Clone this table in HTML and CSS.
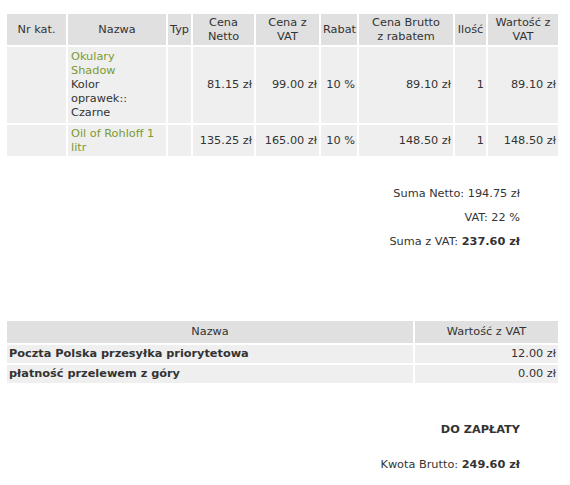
FILE: index.html
```html
<!DOCTYPE html>
<html lang="pl">
<head>
<meta charset="utf-8">
<title>Koszyk</title>
<link rel="stylesheet" href="styles.css">
</head>
<body>
<div class="page">
  <table class="items">
    <thead>
      <tr>
        <th class="c-nr">Nr kat.</th>
        <th class="c-name">Nazwa</th>
        <th class="c-typ">Typ</th>
        <th class="c-netto">Cena Netto</th>
        <th class="c-vat">Cena z VAT</th>
        <th class="c-rabat">Rabat</th>
        <th class="c-brutto">Cena Brutto<br>z rabatem</th>
        <th class="c-ilosc">Ilość</th>
        <th class="c-wart">Wartość z VAT</th>
      </tr>
    </thead>
    <tbody>
      <tr class="tall">
        <td></td>
        <td class="name"><a class="prod" href="#">Okulary Shadow</a><br>Kolor oprawek:: Czarne</td>
        <td></td>
        <td class="num">81.15 zł</td>
        <td class="num">99.00 zł</td>
        <td class="num">10 %</td>
        <td class="num">89.10 zł</td>
        <td class="num">1</td>
        <td class="num">89.10 zł</td>
      </tr>
      <tr>
        <td></td>
        <td class="name"><a class="prod" href="#">Oil of Rohloff 1 litr</a></td>
        <td></td>
        <td class="num">135.25 zł</td>
        <td class="num">165.00 zł</td>
        <td class="num">10 %</td>
        <td class="num">148.50 zł</td>
        <td class="num">1</td>
        <td class="num">148.50 zł</td>
      </tr>
    </tbody>
  </table>

  <div class="sums">
    <p>Suma Netto: 194.75 zł</p>
    <p>VAT: 22 %</p>
    <p>Suma z VAT: <b>237.60 zł</b></p>
  </div>

  <table class="ship">
    <thead>
      <tr>
        <th class="s-name">Nazwa</th>
        <th class="s-val">Wartość z VAT</th>
      </tr>
    </thead>
    <tbody>
      <tr>
        <td class="bold">Poczta Polska przesyłka priorytetowa</td>
        <td class="num">12.00 zł</td>
      </tr>
      <tr>
        <td class="bold">płatność przelewem z góry</td>
        <td class="num">0.00 zł</td>
      </tr>
    </tbody>
  </table>

  <div class="total">
    <p class="total-title">DO ZAPŁATY</p>
    <p>Kwota Brutto: <b>249.60 zł</b></p>
  </div>
</div>
</body>
</html>
```
FILE: styles.css
```css
html, body {
  margin: 0;
  padding: 0;
  background: #ffffff;
}
body {
  font-family: "DejaVu Sans", Verdana, sans-serif;
  font-size: 11.3px;
  color: #333333;
}
.page {
  padding: 12px 0 0 5px;
  width: 555px;
}
table {
  border-collapse: separate;
  border-spacing: 2px;
  table-layout: fixed;
  width: 555px;
}
th, td {
  box-sizing: border-box;
  line-height: 14px;
  font-weight: normal;
}
th {
  background: #e0e0e0;
  text-align: center;
  padding: 1px 2px;
  height: 31px;
}
td {
  background: #efefef;
  padding: 1px 2px;
  height: 31px;
  vertical-align: middle;
}
.items .tall td {
  padding-top: 3px;
  padding-bottom: 3px;
}
.items .name {
  text-align: left;
  padding-left: 3px;
  padding-right: 9px;
}
.num {
  text-align: right;
}
.prod {
  color: #7c9a2e;
  text-decoration: none;
}
.c-nr { width: 59px; }
.c-name { width: 98px; }
.c-typ { width: 23px; }
.c-netto { width: 61px; }
.c-vat { width: 63px; }
.c-rabat { width: 36px; }
.c-brutto { width: 94px; }
.c-ilosc { width: 31px; }
.c-wart { width: 70px; }

.sums {
  width: 515px;
  text-align: right;
  margin-top: 29px;
}
.sums p {
  margin: 0 0 10px;
  line-height: 14px;
}
.ship {
  margin-top: 70px;
}
.ship th {
  height: 22px;
}
.ship td {
  height: 18px;
  padding: 1px 2px;
}
.s-val { width: 143px; }
.bold {
  font-weight: bold;
}
.total {
  width: 515px;
  text-align: right;
  margin-top: 38px;
}
.total p {
  margin: 0 0 21px;
  line-height: 14px;
}
.total-title {
  font-weight: bold;
}
```
